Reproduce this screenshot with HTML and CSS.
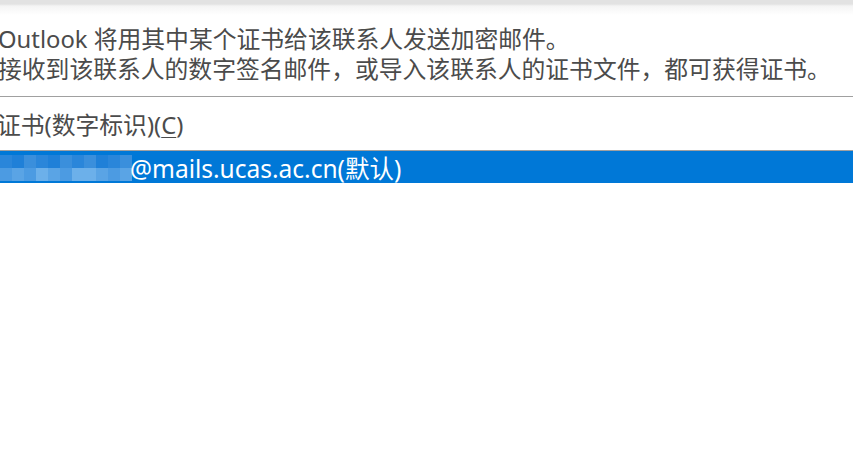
FILE: index.html
```html
<!DOCTYPE html>
<html lang="zh-CN">

<head>
  <meta charset="UTF-8" />
  <meta name="viewport" content="width=device-width, initial-scale=1.0" />
  <title>证书</title>
  <link rel="stylesheet" href="styles.css">
</head>

<body>
  <div class="topbar"></div>
  <div class="intro">
    <p>Outlook 将用其中某个证书给该联系人发送加密邮件。</p>
    <p>接收到该联系人的数字签名邮件，或导入该联系人的证书文件，都可获得证书。</p>
  </div>
  <hr />
  <div class="label">证书(数字标识)(<u>C</u>)</div>
  <ul class="list">
    <li class="selected">
      <span class="mosaic">
        <i class="a"></i><i class="b"></i><i class="c"></i><i class="a"></i><i class="b"></i><i class="c"></i><i class="a"></i><i class="c"></i><i class="b"></i><i class="a"></i><i class="c"></i>
        <i class="d"></i><i class="e"></i><i class="d"></i><i class="f"></i><i class="e"></i><i class="d"></i><i class="f"></i><i class="f"></i><i class="e"></i><i class="d"></i><i class="e"></i>
      </span>
      <span>@mails.ucas.ac.cn(默认)</span>
    </li>
  </ul>
</body>

</html>
```

FILE: styles.css
```css
body {
  margin: 0;
  padding: 0;
  background: #fff;
  font-family: "Noto Sans", "Noto Sans CJK SC", sans-serif;
  color: #4b4b4b;
  overflow: hidden;
}

.topbar {
  height: 15px;
  background: linear-gradient(#e2e2e2 0, #e2e2e2 4px, #f4f4f4 6px, #fff 15px);
}

.intro {
  margin-left: -2px;
  padding-top: 9px;
}

.intro>p {
  margin: 0;
  font-size: 23.8px;
  line-height: 30px;
  white-space: nowrap;
}

hr {
  margin: 12px 0 0 0;
  border: none;
  border-top: 1px solid #a0a0a0;
}

.label {
  margin-left: -3px;
  margin-top: 12px;
  font-size: 23.8px;
  line-height: 32px;
  height: 41px;
}

.label>u {
  text-decoration-thickness: 1px;
  text-underline-offset: 3px;
}

.list {
  list-style: none;
  margin: 0;
  padding: 0;
  border-top: 1px solid #a0a0a0;
}

.list>li {
  display: flex;
  align-items: center;
  height: 32px;
  font-size: 24.5px;
  white-space: nowrap;
}

.selected {
  background: #0078d7;
  color: #fff;
}

.mosaic {
  display: grid;
  grid-template-columns: repeat(11, 12px);
  grid-template-rows: 13px 13px;
  width: 130px;
  margin-top: 2px;
}

.mosaic>i {
  display: block;
}

.a { background: #2a86da; }
.b { background: #1f80d8; }
.c { background: #3a8fdc; }
.d { background: #4c9be2; }
.e { background: #5aa4e5; }
.f { background: #6cb0ea; }
```
